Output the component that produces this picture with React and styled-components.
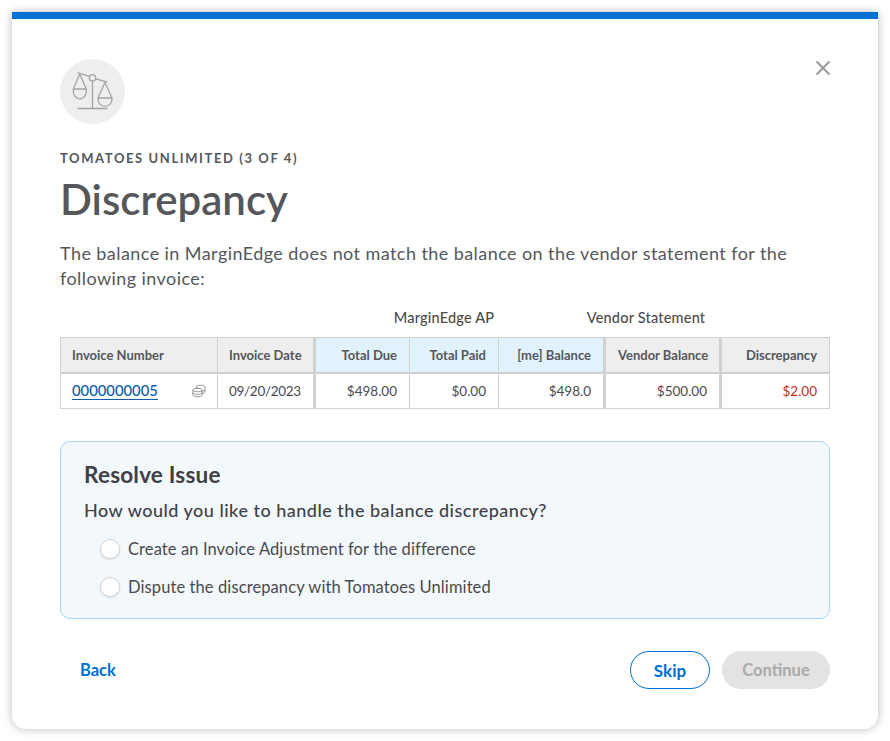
import styled, { createGlobalStyle } from "styled-components";

const GlobalStyle = createGlobalStyle`
  html, body {
    margin: 0;
    background: #ffffff;
  }
  body {
    font-family: "Lato", "Open Sans", sans-serif;
    color: #4a4b4d;
  }
`;

function ScaleIcon() {
  return (
    <svg width="44" height="44" viewBox="70.5 69.5 44 44" fill="none" stroke="#a2a5a3" strokeWidth="1.3">
      <path d="M77 72.3 L89 75.9 M95.2 78.3 L107 81.7" />
      <circle cx="92" cy="77.3" r="3.2" />
      <path d="M92 80.5 V108 M77 108 H107" />
      <path d="M79.2 73.5 L72.8 88.5 C72.2 94 75 98.3 79.3 98.3 C83.6 98.3 86.5 94 85.8 88.5 Z M72.8 88.5 H85.8" />
      <path d="M104.5 82 L97.5 97.5 C97 102 100 105.8 104.5 105.8 C109 105.8 112 102 111.5 97.5 Z M97.5 97.5 H111.5" />
    </svg>
  );
}

function StackIcon() {
  return (
    <svg width="14" height="14" viewBox="0 0 14 14" fill="none" stroke="#7c7f80" strokeWidth="0.8">
      <ellipse cx="5.5" cy="6" rx="4.6" ry="1.8" />
      <path d="M0.9 6 V11 C0.9 12 2.9 12.8 5.5 12.8 C8.1 12.8 10.1 12 10.1 11 V6" />
      <path d="M0.9 8.6 C0.9 9.6 2.9 10.4 5.5 10.4 C8.1 10.4 10.1 9.6 10.1 8.6" />
      <path d="M4 3 C4 2 6 1.2 8.5 1.2 C11 1.2 13 2 13 3 V8 C13 8.8 11.8 9.5 10.1 9.7" />
      <path d="M4 3 C4 4 5.5 4.4 7 4.5 M13 5.5 C13 6.4 11.8 7 10.1 7.2" />
    </svg>
  );
}

export default function App() {
  return (
    <>
      <GlobalStyle />
      <Page>
        <Card>
          <CloseButton aria-label="Close">
            <svg width="16" height="16" viewBox="0 0 16 16" stroke="#9a9d9d" strokeWidth="2" fill="none">
              <path d="M1.5 1.5 L14.5 14.5 M14.5 1.5 L1.5 14.5" />
            </svg>
          </CloseButton>
          <IconCircle>
            <ScaleIcon />
          </IconCircle>
          <Eyebrow>TOMATOES UNLIMITED (3 OF 4)</Eyebrow>
          <Title>Discrepancy</Title>
          <Description>
            The balance in MarginEdge does not match the balance on the vendor statement for the following invoice:
          </Description>

          <GroupLabels>
            <GroupLabel $width={256}>MarginEdge AP</GroupLabel>
            <GroupLabel $width={148}>Vendor Statement</GroupLabel>
          </GroupLabels>

          <Table>
            <colgroup>
              <col style={{ width: 157 }} />
              <col style={{ width: 97 }} />
              <col style={{ width: 95 }} />
              <col style={{ width: 89 }} />
              <col style={{ width: 106 }} />
              <col style={{ width: 116 }} />
              <col style={{ width: 109 }} />
            </colgroup>
            <thead>
              <tr>
                <Th $left>Invoice Number</Th>
                <Th $left $thick>Invoice Date</Th>
                <Th $blue>Total Due</Th>
                <Th $blue>Total Paid</Th>
                <Th $blue $thick>[me] Balance</Th>
                <Th $thick>Vendor Balance</Th>
                <Th>Discrepancy</Th>
              </tr>
            </thead>
            <tbody>
              <tr>
                <InvoiceTd $left>
                  <InvoiceCell>
                    <InvoiceLink href="#">0000000005</InvoiceLink>
                    <StackIcon />
                  </InvoiceCell>
                </InvoiceTd>
                <DateCell $left $thick>09/20/2023</DateCell>
                <Td>$498.00</Td>
                <Td>$0.00</Td>
                <Td $thick>$498.0</Td>
                <Td $thick>$500.00</Td>
                <Td $red>$2.00</Td>
              </tr>
            </tbody>
          </Table>

          <Panel>
            <PanelTitle>Resolve Issue</PanelTitle>
            <Question>How would you like to handle the balance discrepancy?</Question>
            <Options>
              <Option>
                <Radio />
                Create an Invoice Adjustment for the difference
              </Option>
              <Option>
                <Radio />
                Dispute the discrepancy with Tomatoes Unlimited
              </Option>
            </Options>
          </Panel>

          <Footer>
            <BackLink href="#">Back</BackLink>
            <FooterActions>
              <SkipButton>Skip</SkipButton>
              <ContinueButton disabled>Continue</ContinueButton>
            </FooterActions>
          </Footer>
        </Card>
      </Page>
    </>
  );
}

const Page = styled.div`
  padding: 12px;
  width: 890px;
  height: 741px;
  box-sizing: border-box;
`;

const Card = styled.div`
  position: relative;
  box-sizing: border-box;
  width: 866px;
  height: 717px;
  padding: 40px 48px 0;
  background: #ffffff;
  border-top: 7px solid #0070d2;
  border-radius: 0 0 14px 14px;
  box-shadow: 0 0 10px rgba(0, 0, 0, 0.28);
`;

const CloseButton = styled.button`
  position: absolute;
  top: 41px;
  right: 47px;
  padding: 0;
  display: flex;
  border: none;
  background: none;
`;

const IconCircle = styled.div`
  width: 65px;
  height: 65px;
  border-radius: 50%;
  background: #eeeeee;
  display: flex;
  align-items: center;
  justify-content: center;
`;

const Eyebrow = styled.div`
  margin-top: 27px;
  font-size: 13px;
  line-height: 15px;
  font-weight: 700;
  letter-spacing: 1.6px;
  color: #55575a;
`;

const Title = styled.h1`
  margin: 7px 0 0;
  font-size: 42px;
  line-height: 52px;
  font-weight: 600;
  color: #55575a;
`;

const Description = styled.p`
  margin: 16px 0 0;
  font-size: 18px;
  line-height: 25px;
  letter-spacing: 0.43px;
  color: #55575a;
`;

const GroupLabels = styled.div`
  display: flex;
  margin: 18px 0 0 256px;
`;

const GroupLabel = styled.div`
  width: ${(p) => p.$width}px;
  flex: none;
  text-align: center;
  font-size: 14.5px;
  line-height: 18px;
  font-weight: 500;
  letter-spacing: 0.2px;
  white-space: nowrap;
  color: #4a4b4d;
`;

const Table = styled.table`
  width: 769px;
  margin-top: 10px;
  table-layout: fixed;
  border-collapse: collapse;
  font-size: 13.5px;
`;

const Th = styled.th`
  height: 35px;
  padding: 0 12px 0 ${(p) => (p.$left ? "11px" : "12px")};
  box-sizing: border-box;
  font-size: 13px;
  font-weight: 700;
  white-space: nowrap;
  color: #55575a;
  text-align: ${(p) => (p.$left ? "left" : "right")};
  background: ${(p) => (p.$blue ? "#e1f2fd" : "#eeeeee")};
  border: 1px solid #d1d1d1;
  border-bottom-width: 2px;
  border-right-width: ${(p) => (p.$thick ? "3px" : "1px")};
`;

const Td = styled.td`
  height: 36px;
  padding: 0 12px 0 ${(p) => (p.$left ? "11px" : "12px")};
  box-sizing: border-box;
  white-space: nowrap;
  color: ${(p) => (p.$red ? "#c23120" : "#4a4b4d")};
  text-align: ${(p) => (p.$left ? "left" : "right")};
  border: 1px solid #d1d1d1;
  border-right-width: ${(p) => (p.$thick ? "3px" : "1px")};
`;

const InvoiceTd = styled(Td)`
  padding-right: 11px;
`;

const DateCell = styled(Td)`
  letter-spacing: -0.3px;
`;

const InvoiceCell = styled.div`
  display: flex;
  align-items: center;
  justify-content: space-between;
`;

const InvoiceLink = styled.a`
  font-size: 14.8px;
  font-weight: 500;
  color: #0b5cab;
  text-decoration: none;
  border-bottom: 1px solid #0b5cab;
`;

const Panel = styled.div`
  box-sizing: border-box;
  height: 178px;
  margin-top: 32px;
  padding: 19px 23px 0;
  background: #f3f8fd;
  border: 1px solid #a6d4fa;
  border-radius: 10px;
`;

const PanelTitle = styled.h2`
  margin: 0;
  font-size: 22.5px;
  line-height: 28px;
  font-weight: 700;
  letter-spacing: 0.2px;
  color: #3f4144;
`;

const Question = styled.div`
  margin-top: 9px;
  font-size: 18px;
  line-height: 25px;
  font-weight: 500;
  letter-spacing: 0.5px;
  color: #3f4144;
`;

const Options = styled.div`
  display: flex;
  flex-direction: column;
  gap: 8px;
  margin: 11px 0 0 16px;
`;

const Option = styled.label`
  display: flex;
  align-items: center;
  gap: 8px;
  height: 30px;
  font-size: 16.5px;
  letter-spacing: 0.1px;
  color: #4a4b4d;
`;

const Radio = styled.span`
  width: 18px;
  height: 18px;
  flex: none;
  border: 1px solid #d4d4d4;
  border-radius: 50%;
  background: #ffffff;
  box-shadow: 0 1px 2px rgba(0, 0, 0, 0.12);
`;

const Footer = styled.div`
  display: flex;
  align-items: center;
  justify-content: space-between;
  margin-top: 32px;
  padding-left: 20px;
`;

const BackLink = styled.a`
  font-size: 16.5px;
  font-weight: 700;
  color: #0070d2;
  text-decoration: none;
`;

const FooterActions = styled.div`
  display: flex;
  gap: 12px;
`;

const SkipButton = styled.button`
  width: 80px;
  height: 38px;
  border: 1px solid #0070d2;
  border-radius: 19px;
  background: #ffffff;
  color: #0070d2;
  font: 700 17px "Lato", sans-serif;
`;

const ContinueButton = styled.button`
  width: 108px;
  height: 38px;
  border: none;
  border-radius: 19px;
  background: #e3e3e3;
  color: #a9a9a9;
  font: 700 16.5px "Lato", sans-serif;
`;
